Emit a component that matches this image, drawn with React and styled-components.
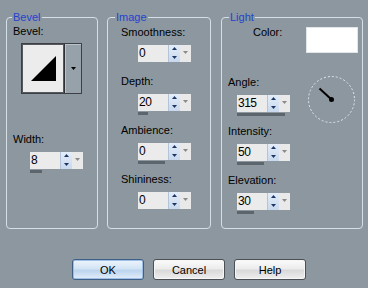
import React from "react";
import styled, { createGlobalStyle } from "styled-components";

const GlobalStyle = createGlobalStyle`
  html, body {
    margin: 0;
    padding: 0;
    background: #8c979f;
  }
  body {
    font-family: "Liberation Sans", Arial, sans-serif;
  }
`;

const Dialog = styled.div`
  width: 368px;
  height: 288px;
  box-sizing: border-box;
  padding: 11px 0 0 6px;
  background: #8c979f;
  font-size: 11px;
  color: #000;
`;

const Groups = styled.div`
  display: flex;
  align-items: flex-start;
  gap: 9px;
`;

const Group = styled.fieldset`
  margin: 0 0 0 ${(p) => p.$shift || 0}px;
  padding: 0;
  min-width: 0;
  width: ${(p) => p.$width}px;
  height: 218px;
  box-sizing: border-box;
  border: 1px solid #d5dfe6;
  border-radius: 4px;
`;

const Legend = styled.legend`
  margin-left: ${(p) => p.$inset}px;
  padding: 0 1px;
  line-height: 13px;
  font-size: 11px;
  color: #2443cf;
`;

const Label = styled.div`
  line-height: 13px;
  padding-left: ${(p) => p.$indent}px;
  white-space: nowrap;
`;

const FieldBox = styled.div`
  margin-top: ${(p) => p.$gap}px;
`;

const SpinBox = styled.div`
  display: flex;
  height: 17px;
  margin: 6px 0 0 ${(p) => p.$indent}px;
`;

const SpinInput = styled.div`
  width: 30px;
  box-sizing: border-box;
  padding-left: 1px;
  background: #ebebeb;
  font-size: 12px;
  line-height: 17px;
  letter-spacing: -0.5px;
`;

const SpinArrows = styled.div`
  width: 12px;
  box-sizing: border-box;
  display: flex;
  flex-direction: column;
  align-items: center;
  justify-content: space-between;
  padding: 2px 0 3px;
  background: linear-gradient(#e4edf9, #c8d8ee);
  border-left: 1px solid #b3c4d9;
`;

const DropArrow = styled.div`
  width: 11px;
  box-sizing: border-box;
  display: flex;
  justify-content: center;
  padding-top: 6px;
  background: #e9e9e9;
`;

const Bar = styled.div`
  height: 3px;
  margin: 1px 0 0 ${(p) => p.$indent}px;
  width: ${(p) => p.$width}px;
  background: #5d656c;
`;

const Preview = styled.div`
  display: flex;
  width: 61px;
  height: 51px;
  box-sizing: border-box;
  margin: 5px 0 0 14px;
  border: 1px solid #3c4044;
`;

const PreviewFace = styled.div`
  width: 42px;
  box-sizing: border-box;
  border: 1px solid #55595d;
  background: #ececec;
  svg {
    display: block;
  }
`;

const PreviewDrop = styled.div`
  flex: 1;
  display: flex;
  align-items: center;
  justify-content: center;
  border-left: 1px solid #2f3337;
  background: #97a1a9;
  box-shadow: inset 1px 1px 0 #b9c3cb;
`;

const ColorRow = styled.div`
  display: flex;
  align-items: flex-start;
`;

const ColorLabel = styled(Label)`
  margin-top: 2px;
`;

const Swatch = styled.div`
  width: 52px;
  height: 26px;
  box-sizing: border-box;
  margin: 3px 4px 0 auto;
  background: #fff;
  border: 1px solid #e2e6ea;
`;

const LightBody = styled.div`
  display: flex;
  align-items: flex-start;
  margin-top: 23px;
`;

const LightFields = styled.div`
  width: 84px;
`;

const Dial = styled.svg`
  display: block;
  margin-left: 2px;
`;

const ButtonRow = styled.div`
  display: flex;
  gap: 9px;
  margin: 30px 0 0 66px;
`;

const Button = styled.button`
  width: 72px;
  height: 21px;
  padding: 0;
  font-family: "Liberation Sans", Arial, sans-serif;
  font-size: 11px;
  color: #000;
  border-radius: 3px;
  border: 1px solid ${(p) => (p.$primary ? "#3f5f86" : "#4a5056")};
  background: ${(p) =>
    p.$primary
      ? "linear-gradient(#eef5fc, #d3e4f5 45%, #bcd4ee 55%, #e2eefa)"
      : "linear-gradient(#fbfbfb, #ececec 45%, #d9d9d9 55%, #efefef)"};
  box-shadow: inset 0 0 0 1px ${(p) => (p.$primary ? "#9fc0e6" : "#f6f6f6")};
`;

function Triangle({ up, color }) {
  return (
    <svg width="5" height="3" viewBox="0 0 5 3">
      <path d={up ? "M2.5 0L5 3H0z" : "M0 0H5L2.5 3z"} fill={color} />
    </svg>
  );
}

function Field({ label, value, bar = 0, labelIndent, spinIndent, gap }) {
  return (
    <FieldBox $gap={gap}>
      <Label $indent={labelIndent}>{label}</Label>
      <SpinBox $indent={spinIndent}>
        <SpinInput>{value}</SpinInput>
        <SpinArrows>
          <Triangle up color="#1d3563" />
          <Triangle color="#1d3563" />
        </SpinArrows>
        <DropArrow>
          <Triangle color="#8a8a8a" />
        </DropArrow>
      </SpinBox>
      <Bar $indent={spinIndent} $width={bar} />
    </FieldBox>
  );
}

export default function App() {
  return (
    <>
      <GlobalStyle />
      <Dialog>
        <Groups>
          <Group $width={92}>
            <Legend $inset={5}>Bevel</Legend>
            <Label $indent={6} style={{ paddingTop: 1 }}>
              Bevel:
            </Label>
            <Preview>
              <PreviewFace>
                <svg width="40" height="47" viewBox="0 0 40 47">
                  <path d="M8 36H33V11z" fill="#000" />
                </svg>
              </PreviewFace>
              <PreviewDrop>
                <Triangle color="#000" />
              </PreviewDrop>
            </Preview>
            <Field label="Width:" value="8" bar={12} labelIndent={6} spinIndent={23} gap={39} />
          </Group>

          <Group $width={104}>
            <Legend $inset={7}>Image</Legend>
            <Field label="Smoothness:" value="0" labelIndent={13} spinIndent={30} gap={2} />
            <Field label="Depth:" value="20" bar={10} labelIndent={13} spinIndent={30} gap={9} />
            <Field label="Ambience:" value="0" bar={27} labelIndent={13} spinIndent={30} gap={9} />
            <Field label="Shininess:" value="0" labelIndent={13} spinIndent={30} gap={9} />
          </Group>

          <Group $width={142} $shift={1}>
            <Legend $inset={7}>Light</Legend>
            <ColorRow>
              <ColorLabel $indent={31}>Color:</ColorLabel>
              <Swatch />
            </ColorRow>
            <LightBody>
              <LightFields>
                <Field label="Angle:" value="315" bar={48} labelIndent={6} spinIndent={15} gap={0} />
                <Field label="Intensity:" value="50" bar={27} labelIndent={6} spinIndent={15} gap={9} />
                <Field label="Elevation:" value="30" bar={17} labelIndent={6} spinIndent={15} gap={9} />
              </LightFields>
              <Dial width="48" height="48" viewBox="0 0 48 48">
                <circle cx="23.5" cy="23.5" r="23" fill="none" stroke="#dfe7ee" strokeDasharray="2 2" />
                <line x1="23.5" y1="23.5" x2="11.5" y2="12.5" stroke="#000" strokeWidth="2" />
                <circle cx="23.5" cy="23.5" r="2.5" fill="#000" />
              </Dial>
            </LightBody>
          </Group>
        </Groups>

        <ButtonRow>
          <Button $primary>OK</Button>
          <Button>Cancel</Button>
          <Button>Help</Button>
        </ButtonRow>
      </Dialog>
    </>
  );
}
